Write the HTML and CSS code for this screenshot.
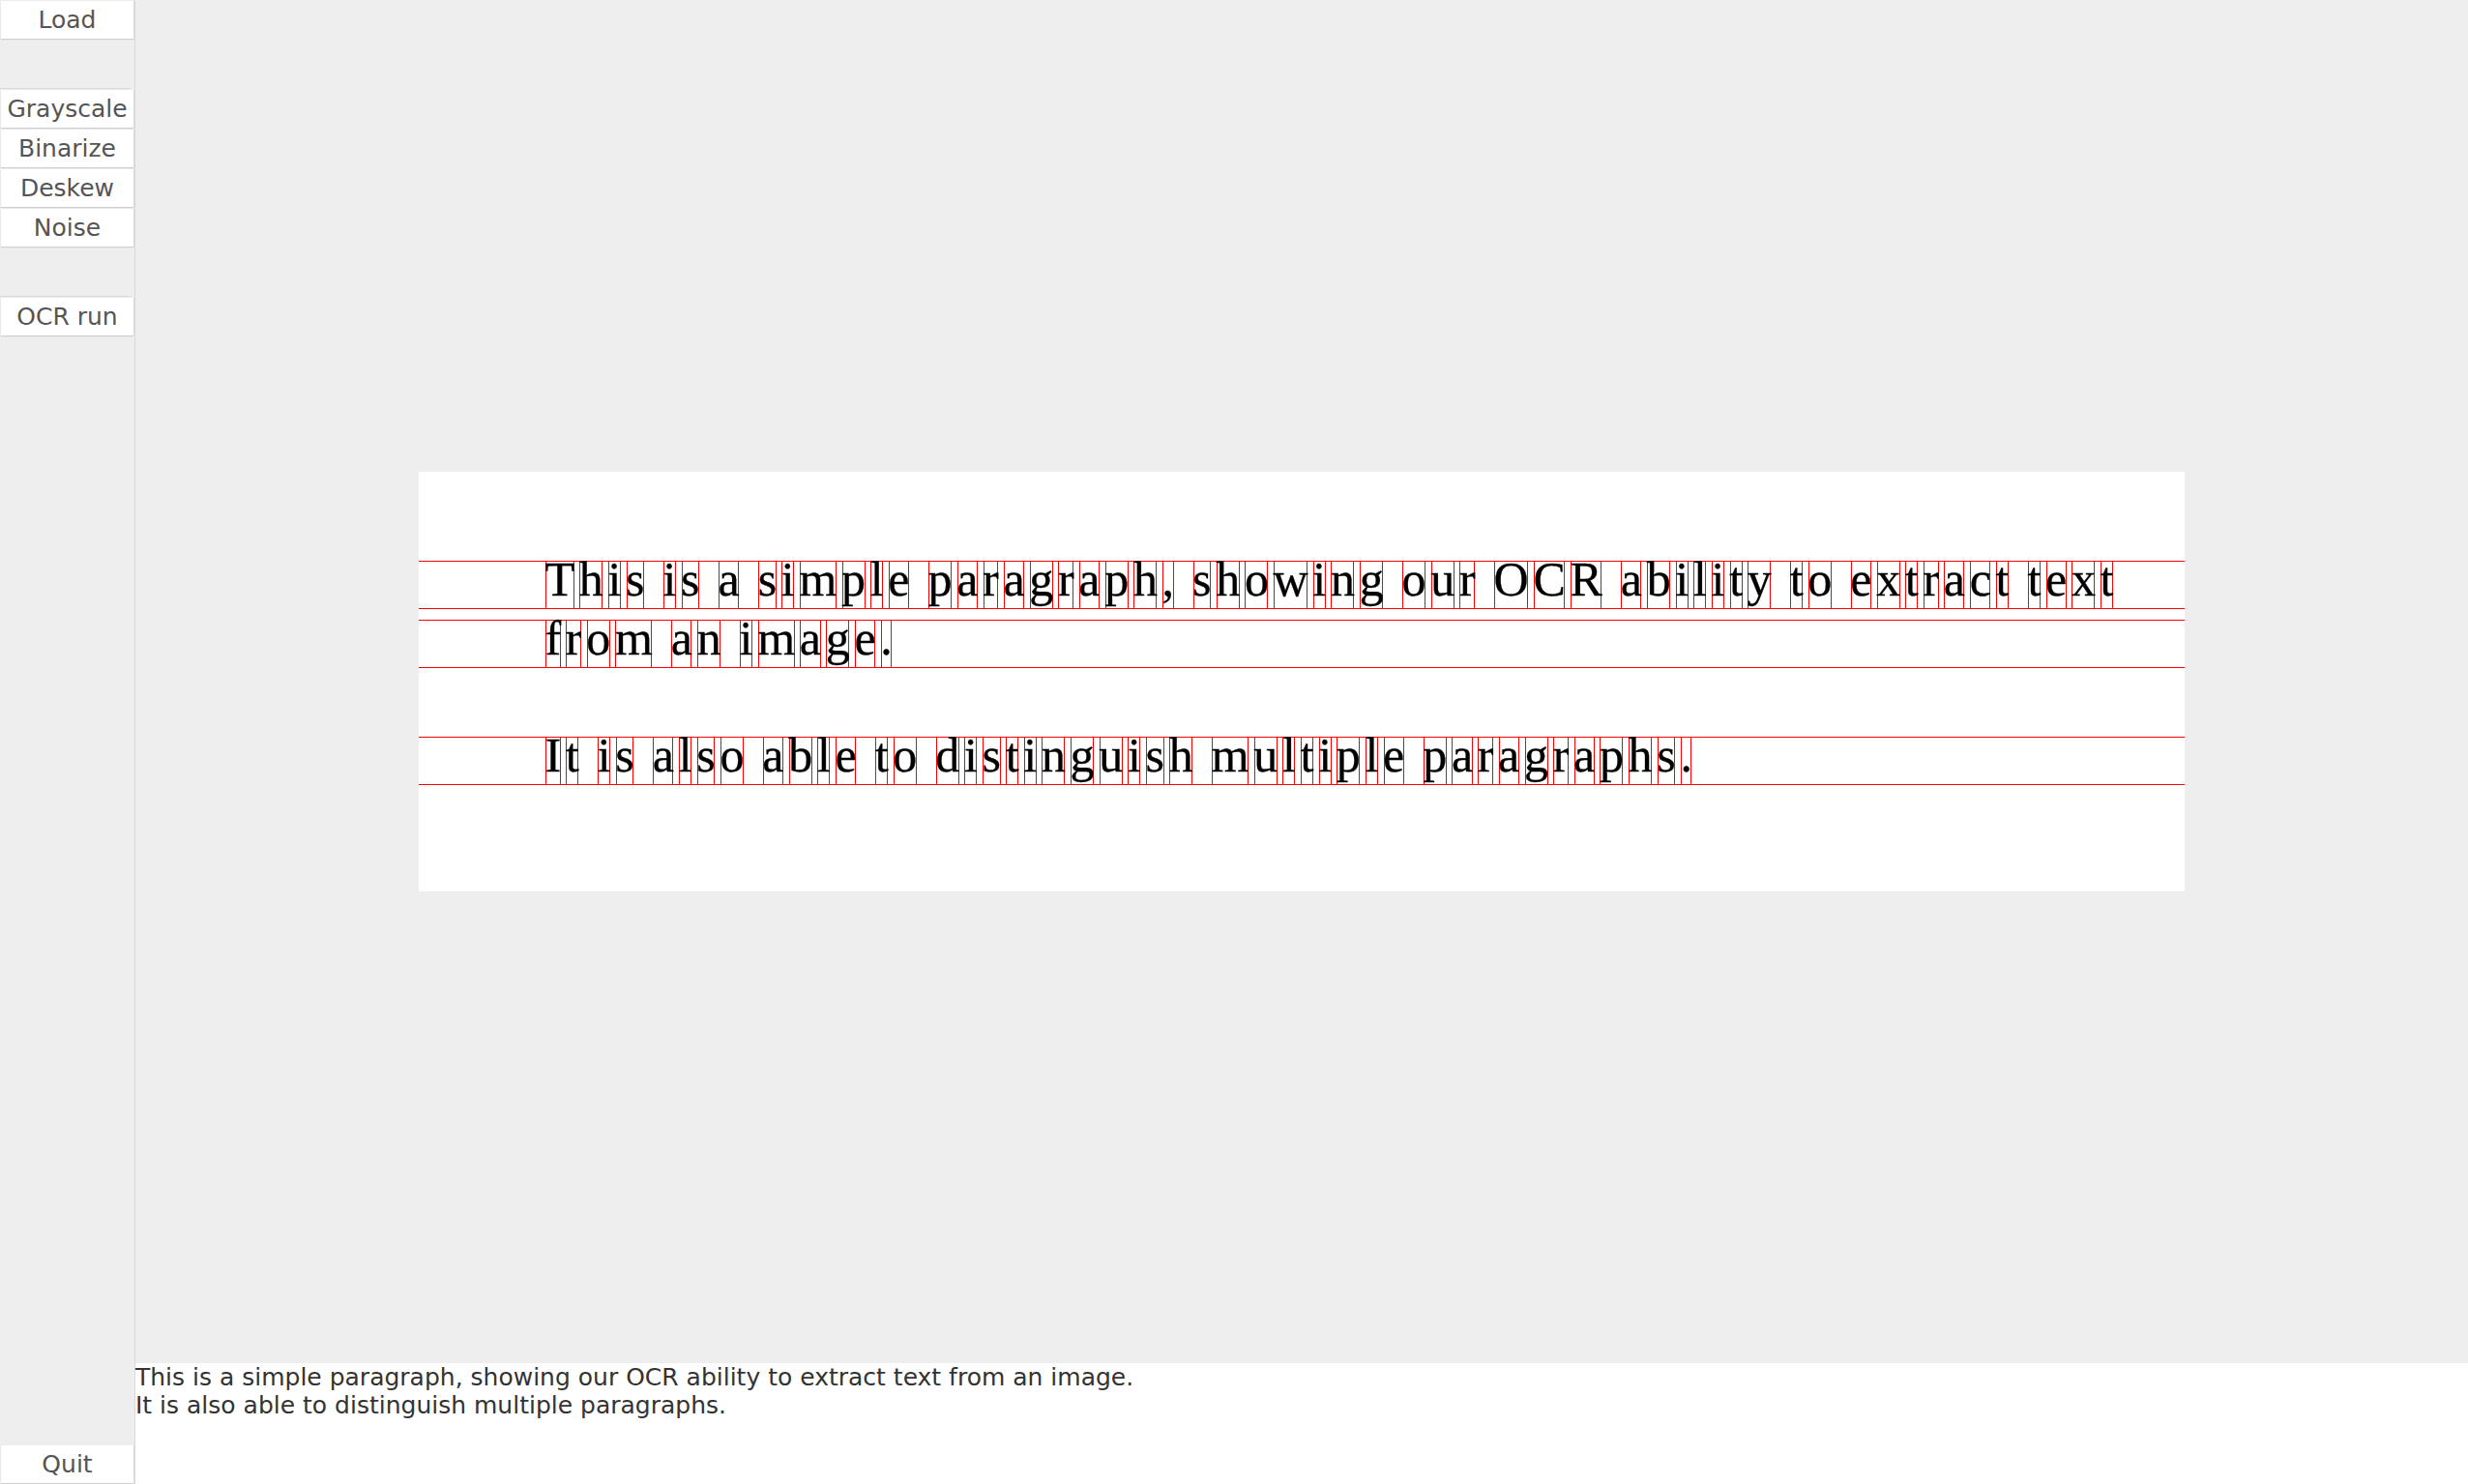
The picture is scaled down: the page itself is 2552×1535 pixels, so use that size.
FILE: index.html
```html
<!DOCTYPE html>
<html>
<head>
<meta charset="utf-8">
<title>OCR</title>
<link rel="stylesheet" href="styles.css">
</head>
<body>
<div class="sidebar">
  <div class="btn">Load</div>
  <div class="sep"></div>
  <div class="group">
    <div class="btn">Grayscale</div>
    <div class="btn">Binarize</div>
    <div class="btn">Deskew</div>
    <div class="btn">Noise</div>
  </div>
  <div class="sep"></div>
  <div class="group">
    <div class="btn">OCR run</div>
  </div>
  <div class="btn quit">Quit</div>
</div>
<div class="main">
  <div class="viewer">
    <div class="image">
      <div class="line"><span class="c">T</span><span class="c">h</span><span class="c">i</span><span class="c">s</span><span class="sp"> </span><span class="c">i</span><span class="c">s</span><span class="sp"> </span><span class="c">a</span><span class="sp"> </span><span class="c">s</span><span class="c">i</span><span class="c">m</span><span class="c">p</span><span class="c">l</span><span class="c">e</span><span class="sp"> </span><span class="c">p</span><span class="c">a</span><span class="c">r</span><span class="c">a</span><span class="c">g</span><span class="c">r</span><span class="c">a</span><span class="c">p</span><span class="c">h</span><span class="c">,</span><span class="sp"> </span><span class="c">s</span><span class="c">h</span><span class="c">o</span><span class="c">w</span><span class="c">i</span><span class="c">n</span><span class="c">g</span><span class="sp"> </span><span class="c">o</span><span class="c">u</span><span class="c">r</span><span class="sp"> </span><span class="c">O</span><span class="c">C</span><span class="c">R</span><span class="sp"> </span><span class="c">a</span><span class="c">b</span><span class="c">i</span><span class="c">l</span><span class="c">i</span><span class="c">t</span><span class="c">y</span><span class="sp"> </span><span class="c">t</span><span class="c">o</span><span class="sp"> </span><span class="c">e</span><span class="c">x</span><span class="c">t</span><span class="c">r</span><span class="c">a</span><span class="c">c</span><span class="c">t</span><span class="sp"> </span><span class="c">t</span><span class="c">e</span><span class="c">x</span><span class="c">t</span></div>
      <div class="line l2"><span class="c">f</span><span class="c">r</span><span class="c">o</span><span class="c">m</span><span class="sp"> </span><span class="c">a</span><span class="c">n</span><span class="sp"> </span><span class="c">i</span><span class="c">m</span><span class="c">a</span><span class="c">g</span><span class="c">e</span><span class="c">.</span></div>
      <div class="line l3"><span class="c">I</span><span class="c">t</span><span class="sp"> </span><span class="c">i</span><span class="c">s</span><span class="sp"> </span><span class="c">a</span><span class="c">l</span><span class="c">s</span><span class="c">o</span><span class="sp"> </span><span class="c">a</span><span class="c">b</span><span class="c">l</span><span class="c">e</span><span class="sp"> </span><span class="c">t</span><span class="c">o</span><span class="sp"> </span><span class="c">d</span><span class="c">i</span><span class="c">s</span><span class="c">t</span><span class="c">i</span><span class="c">n</span><span class="c">g</span><span class="c">u</span><span class="c">i</span><span class="c">s</span><span class="c">h</span><span class="sp"> </span><span class="c">m</span><span class="c">u</span><span class="c">l</span><span class="c">t</span><span class="c">i</span><span class="c">p</span><span class="c">l</span><span class="c">e</span><span class="sp"> </span><span class="c">p</span><span class="c">a</span><span class="c">r</span><span class="c">a</span><span class="c">g</span><span class="c">r</span><span class="c">a</span><span class="c">p</span><span class="c">h</span><span class="c">s</span><span class="c">.</span></div>
    </div>
  </div>
  <div class="output">
    <div>This is a simple paragraph, showing our OCR ability to extract text from an image.</div>
    <div>It is also able to distinguish multiple paragraphs.</div>
  </div>
</div>
</body>
</html>
```
FILE: styles.css
```css
html, body {
  margin: 0;
  padding: 0;
}
body {
  width: 2552px;
  height: 1535px;
  overflow: hidden;
  display: flex;
  background: #eeeeee;
  font-family: "DejaVu Sans", sans-serif;
}
.sidebar {
  width: 139px;
  flex: 0 0 139px;
  border-right: 1px solid #d9d9d9;
  background: #eeeeee;
  display: flex;
  flex-direction: column;
  padding-top: 1px;
  box-sizing: content-box;
}
.btn {
  height: 39px;
  margin: 0 1px;
  background: #ffffff;
  box-shadow: 0 1px 1px rgba(0, 0, 0, 0.12), 1px 0 1px rgba(0, 0, 0, 0.06);
  display: flex;
  align-items: center;
  justify-content: center;
  font-size: 25px;
  color: #555555;
  white-space: nowrap;
}
.sep {
  margin-top: 51px;
  width: 135px;
  height: 1px;
  background: #d8d8d8;
}
.group {
  margin-top: 1px;
  display: flex;
  flex-direction: column;
  gap: 2px;
}
.quit {
  margin-top: auto;
  margin-bottom: 1px;
}
.main {
  flex: 1;
  display: flex;
  flex-direction: column;
  min-width: 0;
}
.viewer {
  flex: 1;
  display: flex;
  align-items: center;
  justify-content: center;
  background: #eeeeee;
}
.image {
  width: 1826px;
  height: 434px;
  box-sizing: border-box;
  padding-top: 92px;
  background: #ffffff;
  display: flex;
  flex-direction: column;
}
.line {
  height: 48px;
  border-top: 1px solid #ff0000;
  border-bottom: 1px solid #ff0000;
  display: flex;
  gap: 5.7px;
  padding-left: 131px;
}
.l2 {
  margin-top: 11px;
}
.l3 {
  margin-top: 71px;
}
.c {
  height: 48px;
  border-left: 1px solid #ff0000;
  border-right: 1px solid #ff0000;
  font-family: "Liberation Serif", "Times New Roman", serif;
  font-size: 50px;
  line-height: 36px;
  letter-spacing: -1.5px;
  text-indent: -1.5px;
  color: #000000;
  -webkit-text-stroke: 0.3px #000000;
  white-space: pre;
}
.sp {
  width: 8.6px;
  flex: 0 0 8.6px;
  white-space: pre;
  overflow: hidden;
  font-size: 1px;
}
.output {
  height: 125px;
  flex: 0 0 125px;
  background: #ffffff;
  font-size: 25px;
  line-height: 29px;
  color: #333333;
  white-space: nowrap;
}
```
